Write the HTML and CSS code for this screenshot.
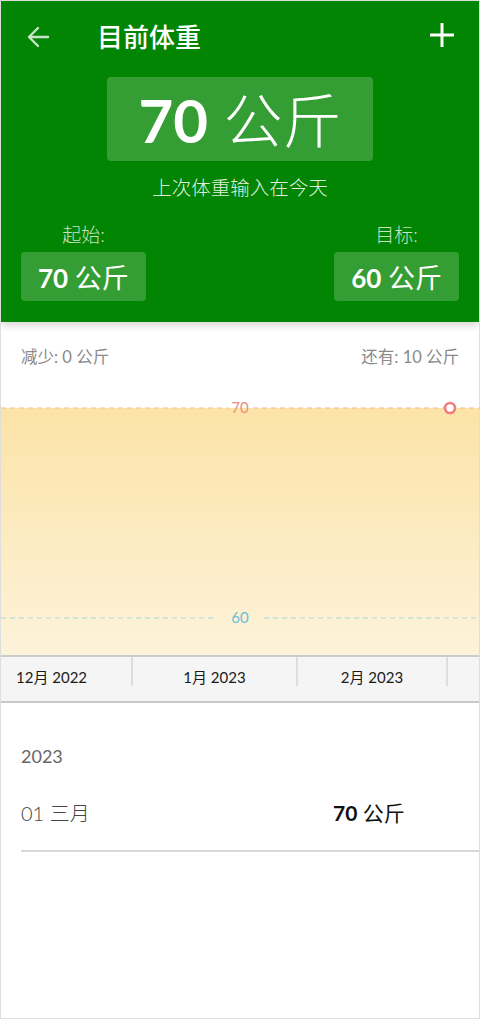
FILE: index.html
```html
<!DOCTYPE html>
<html lang="zh">
<head>
<meta charset="utf-8">
<link rel="stylesheet" href="styles.css">
</head>
<body>
<div class="frame">
  <header class="hero">
    <div class="topbar">
      <svg class="back" width="24" height="24" viewBox="0 0 24 24"><path d="M22 12H3M12 3L3 12l9 9" fill="none" stroke="currentColor" stroke-width="2.4" stroke-linecap="round" stroke-linejoin="round"/></svg>
      <div class="title">目前体重</div>
      <svg class="plus" width="26" height="26" viewBox="0 0 26 26"><path d="M13 1v24M1 13h24" fill="none" stroke="currentColor" stroke-width="3"/></svg>
    </div>
    <div class="current"><span class="txt"><span class="num">70</span> <span class="unit">公斤</span></span></div>
    <div class="last">上次体重输入在今天</div>
    <div class="endpoints">
      <div class="ep">
        <div class="ep-label">起始:</div>
        <div class="ep-box"><span class="txt"><span class="num">70</span> <span class="unit">公斤</span></span></div>
      </div>
      <div class="ep">
        <div class="ep-label">目标:</div>
        <div class="ep-box"><span class="txt"><span class="num">60</span> <span class="unit">公斤</span></span></div>
      </div>
    </div>
  </header>
  <div class="stats">
    <span>减少: 0 公斤</span>
    <span>还有: 10 公斤</span>
  </div>
  <svg class="chart" width="478" height="275" viewBox="0 0 478 275">
    <defs>
      <linearGradient id="fill" x1="0" y1="0" x2="0" y2="1">
        <stop offset="0" stop-color="#fce3a7"/>
        <stop offset="1" stop-color="#fdf3da"/>
      </linearGradient>
    </defs>
    <rect x="0" y="28" width="478" height="247" fill="url(#fill)"/>
    <line x1="0" y1="28" x2="228" y2="28" stroke="#f7c488" stroke-width="1.2" stroke-dasharray="5 4"/>
    <line x1="252" y1="28" x2="478" y2="28" stroke="#f5b59a" stroke-width="1.2" stroke-dasharray="5 4"/>
    <text x="239" y="33" class="lbl70" text-anchor="middle">70</text>
    <line x1="0" y1="238" x2="216" y2="238" stroke="#a9dbe2" stroke-width="1.2" stroke-dasharray="5 4"/>
    <line x1="263" y1="238" x2="478" y2="238" stroke="#a9dbe2" stroke-width="1.2" stroke-dasharray="5 4"/>
    <text x="239" y="243" class="lbl60" text-anchor="middle">60</text>
    <circle cx="449" cy="28" r="5" fill="#fff" stroke="#f07c7c" stroke-width="2.6"/>
  </svg>
  <div class="axis">
    <div class="cell first">12月 2022</div>
    <div class="cell c2">1月 2023</div>
    <div class="cell c3">2月 2023</div>
    <div class="cell c4"></div>
  </div>
  <div class="list">
    <div class="year">2023</div>
    <div class="row">
      <div class="date">01 三月</div>
      <div class="val"><span class="vnum">70</span> <span class="unit">公斤</span></div>
    </div>
    <div class="divider"></div>
  </div>
</div>
</body>
</html>
```
FILE: styles.css
```css
* { box-sizing: border-box; }
html, body { margin: 0; padding: 0; background: #fff; }
body { font-family: "Lato", "Noto Sans CJK SC", sans-serif; }
.frame {
  width: 480px;
  height: 1019px;
  border: 1px solid #dedede;
  overflow: hidden;
  background: #fff;
}
.hero {
  background: #028502;
  height: 321px;
  padding: 0 20px;
  color: #fff;
  position: relative;
  box-shadow: 0 3px 8px rgba(0,0,0,0.18);
}
.topbar {
  height: 70px;
  display: flex;
  align-items: center;
}
.back { color: rgba(255,255,255,0.78); margin-left: 5px; margin-top: 1px; }
.title {
  font-family: "Noto Sans CJK SC", sans-serif;
  font-size: 26px;
  font-weight: 500;
  margin-left: 47px;
  margin-top: -1px;
  flex: 1;
}
.plus { color: #fff; margin-right: 4px; margin-top: -2px; }
.txt { white-space: pre; }
.current {
  width: 266px;
  height: 84px;
  margin: 6px auto 0;
  background: rgba(255,255,255,0.2);
  border-radius: 4px;
  display: flex;
  align-items: center;
  justify-content: center;
  font-size: 60px;
  line-height: 1;
}
.num { font-family: "Lato", sans-serif; font-weight: 700; }
.unit { font-family: "Noto Sans CJK SC", sans-serif; font-weight: 300; }
.current .unit { font-size: 59px; font-weight: 300; }
.last {
  text-align: center;
  font-family: "Noto Sans CJK SC", sans-serif;
  font-size: 19.5px;
  line-height: 26px;
  margin-top: 13px;
  color: rgba(255,255,255,0.9);
  font-weight: 300;
}
.endpoints {
  display: flex;
  justify-content: space-between;
  margin-top: 23px;
}
.ep { display: flex; flex-direction: column; align-items: center; }
.ep-label {
  font-size: 19px;
  line-height: 24px;
  font-weight: 300;
  color: rgba(255,255,255,0.78);
}
.ep-box {
  margin-top: 5px;
  height: 49px;
  padding: 0 17px;
  background: rgba(255,255,255,0.2);
  border-radius: 4px;
  display: flex;
  align-items: center;
  font-size: 26px;
  line-height: 1;
}
.ep-box .unit { font-weight: 400; font-size: 27px; }
.stats {
  height: 58px;
  padding: 24px 20px 0;
  display: flex;
  justify-content: space-between;
  font-size: 16.5px;
  line-height: 22px;
  font-weight: 400;
  color: #8a8a8a;
}
.chart { display: block; }
.lbl70 { font-family: "Lato", sans-serif; font-size: 15px; fill: #ef8a7c; }
.lbl60 { font-family: "Lato", sans-serif; font-size: 15px; fill: #6dbfd8; }
.axis {
  height: 48px;
  border-top: 2px solid #cccccc;
  border-bottom: 2px solid #c7c7c7;
  background: #f5f5f5;
  display: flex;
  align-items: flex-start;
}
.cell {
  height: 29px;
  border-right: 2px solid #dedede;
  display: flex;
  justify-content: center;
  font-size: 15px;
  color: #1a1a1a;
  line-height: 18px;
  padding-top: 11px;
}
.first { width: 132px; justify-content: flex-start; padding-left: 15px; }
.c2 { width: 165px; }
.c3 { width: 150px; }
.c4 { border-right: none; flex: 1; }
.list { padding-left: 20px; }
.year {
  margin-top: 41px;
  font-size: 18px;
  line-height: 24px;
  color: #666;
}
.row {
  margin-top: 30px;
  display: flex;
  align-items: center;
  height: 28px;
}
.date {
  flex: 1;
  font-size: 20px;
  color: #444;
  font-weight: 300;
}
.val {
  width: 146px;
  font-size: 21px;
  color: #111;
  white-space: pre;
}
.vnum { font-weight: 700; }
.val .unit { font-weight: 400; }
.divider {
  margin-top: 24px;
  height: 2px;
  background: #d9d9d9;
}
```
